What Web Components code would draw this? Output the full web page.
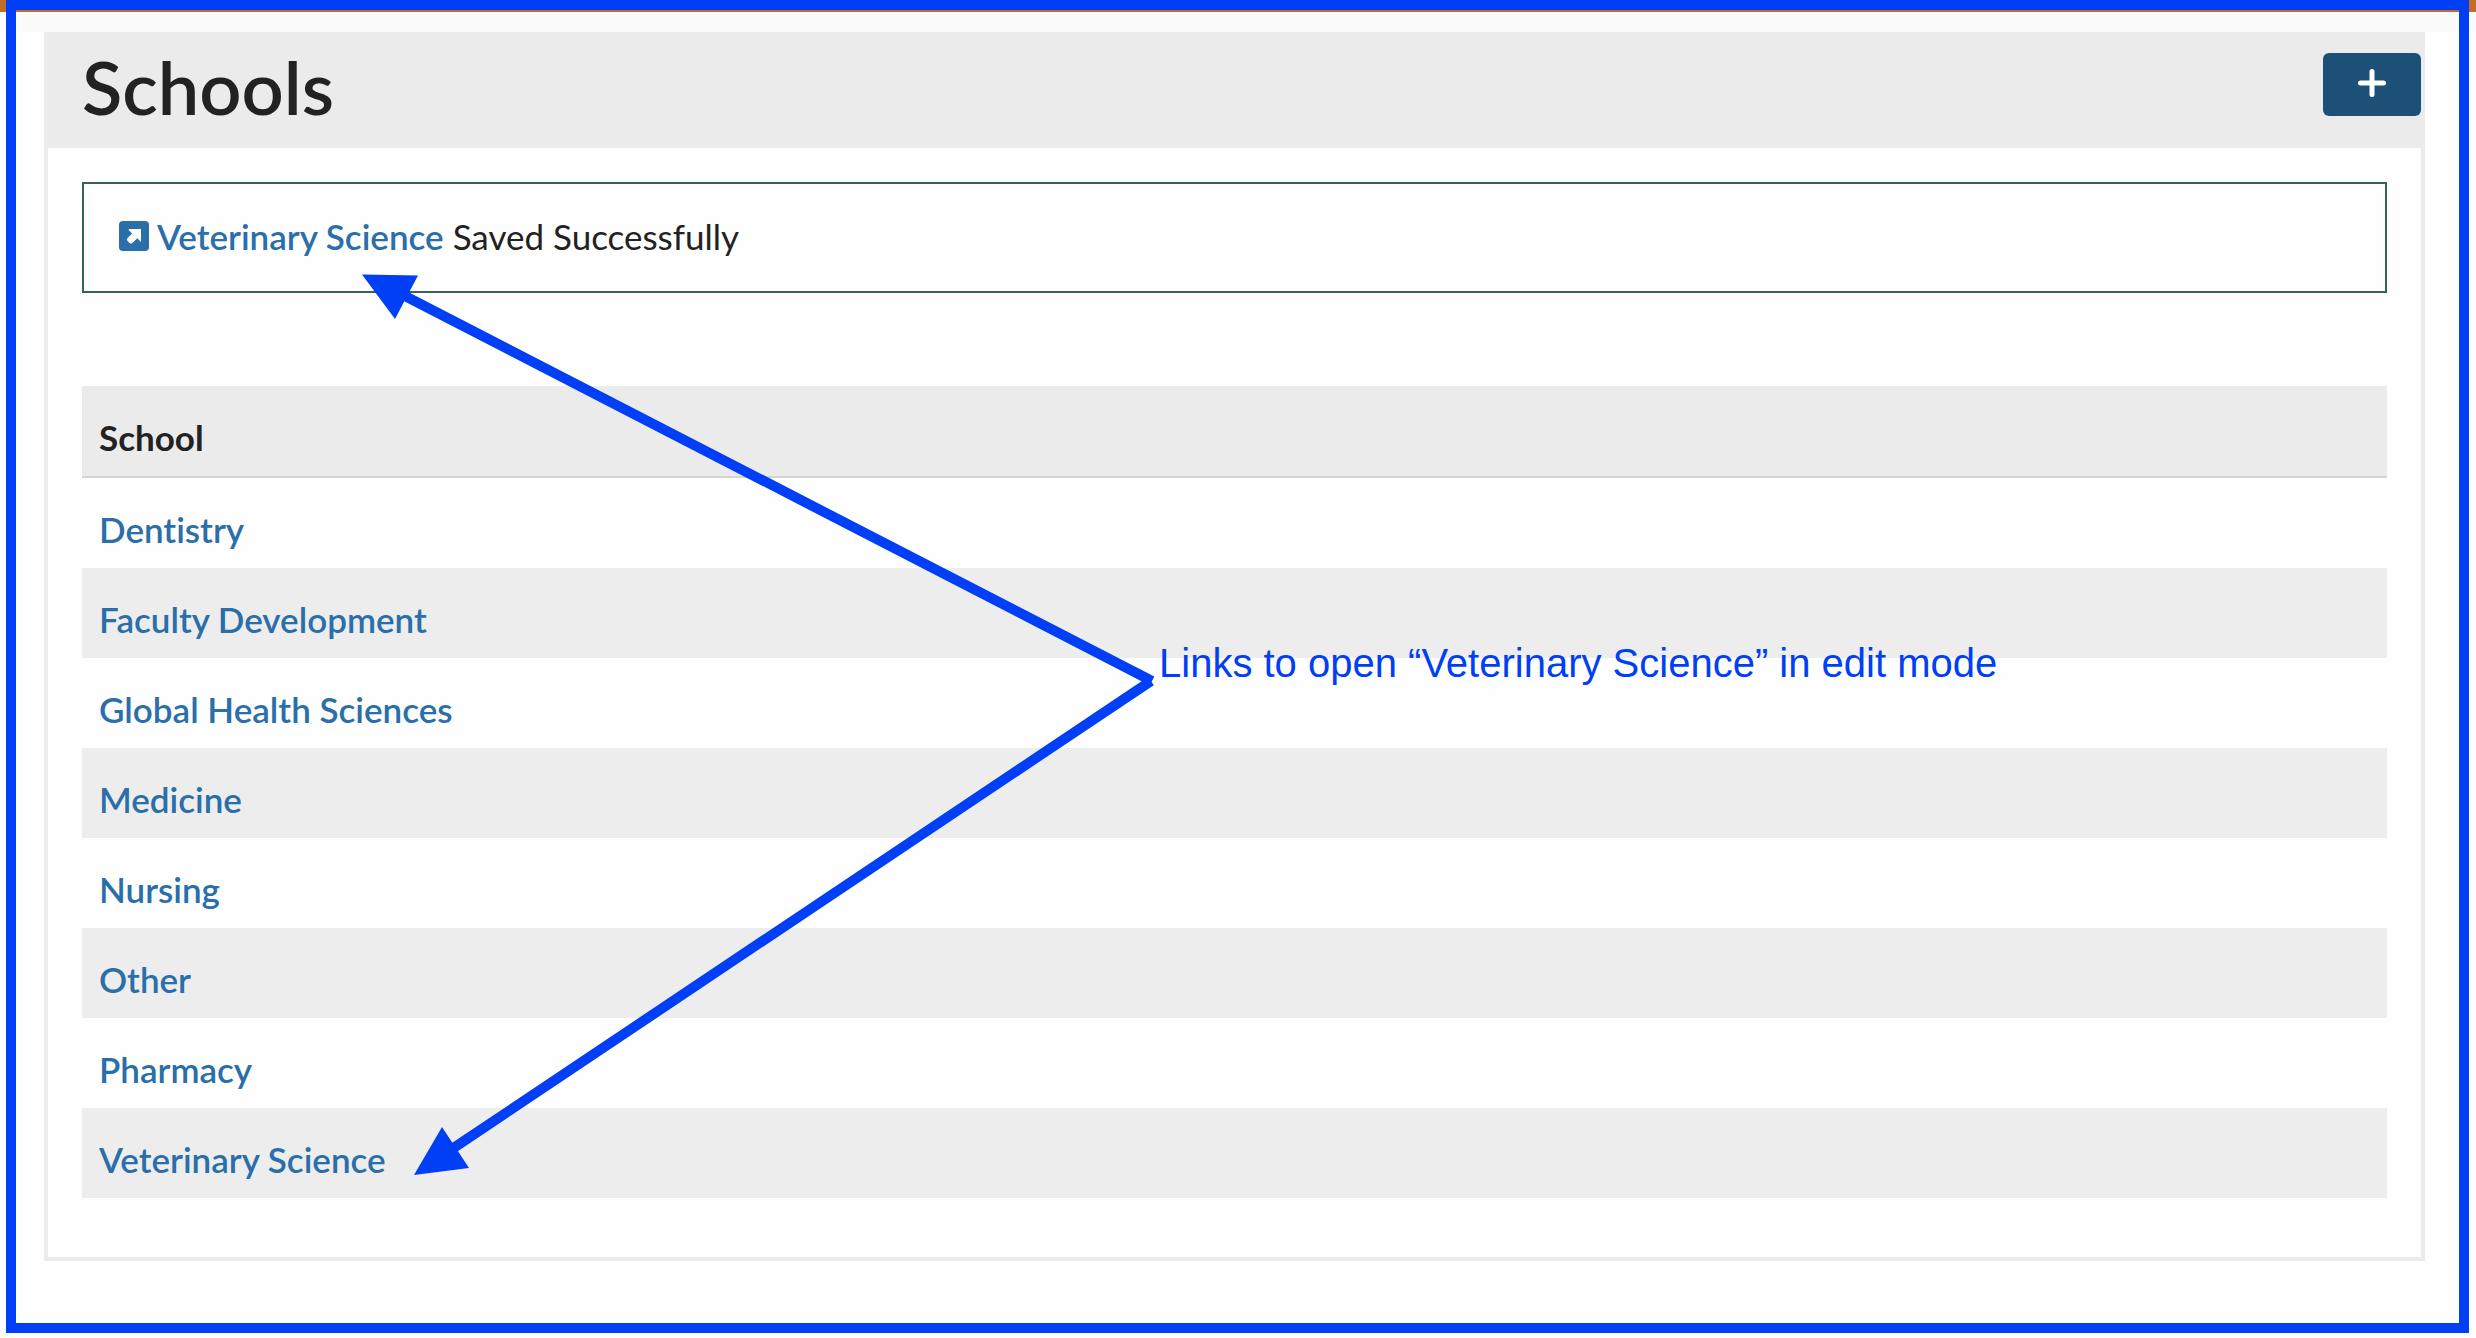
<!DOCTYPE html>
<html lang="en">
<head>
<meta charset="utf-8">
<title>Schools</title>
<style>
html, body { margin: 0; }
body { background: #fefefe; color: #222; font: 35px/50px Lato, sans-serif; font-variant-ligatures: none; }
</style>
</head>
<body>
<app-page>
  <school-panel heading="Schools">
    <save-alert name="Veterinary Science">Saved Successfully</save-alert>
    <school-table></school-table>
  </school-panel>
  <page-callout slot="overlay">Links to open “Veterinary Science” in edit mode</page-callout>
</app-page>
<script>
class Base extends HTMLElement {
  constructor() { super(); this.attachShadow({ mode: 'open' }); }
  connectedCallback() { this.shadowRoot.innerHTML = this.render(); }
}
customElements.define('app-page', class extends Base {
  render() { return `<style>
    :host { display: block; position: relative; box-sizing: border-box; min-height: 100vh; border-top: 12px solid #c26c25; }
    .strip { height: 20px; background: #fbfbfb; }
    main { padding: 0 51px 60px 44px; }
  </style><div class="strip"></div><main><slot></slot></main><slot name="overlay"></slot>`; }
});
customElements.define('school-panel', class extends Base {
  render() { return `<style>
    :host { display: block; border: 4px solid #ebebeb; }
    header { display: flex; justify-content: space-between; align-items: flex-start; background: #ebebeb; padding: 0 0 10px 34px; }
    h1 { margin: 0; font-size: 74px; line-height: 102px; font-weight: 600; }
    button { width: 98px; height: 63px; margin: 17px 0 0; padding: 0 0 4px; border: 0; border-radius: 6px; background: #1d5077; display: flex; align-items: center; justify-content: center; }
    .body { padding: 34px 34px 59px; }
  </style><header><h1>${this.getAttribute('heading')}</h1>
  <button type="button" aria-label="Add school"><svg width="28" height="28" viewBox="0 0 28 28" stroke="#fff" stroke-width="5" stroke-linecap="round"><path d="M14 2.5v23M2.5 14h23"/></svg></button></header>
  <div class="body"><slot></slot></div>`; }
});
customElements.define('save-alert', class extends Base {
  render() { return `<style>
    :host { display: flex; align-items: center; gap: 9px; border: 2px solid #35644f; padding: 27px 35px 30px; margin-bottom: 93px; }
    a { color: #2a6fa9; font-weight: 600; text-decoration: none; display: flex; align-items: center; gap: 8px; }
    svg { display: block; }
  </style><a href="#veterinary-science"><svg width="30" height="30" viewBox="0 0 30 30"><rect width="30" height="30" rx="4" fill="#2a6fa9"/><path d="M10 8h12v13l-3.700-3.700-5 4.700q-1.500 1.200-2.700 0l-2.200-2.200q-1.100-1.200 0-2.500l4.700-4.800-3.600-3.500z" fill="#fff"/></svg>${this.getAttribute('name')}</a><span><slot></slot></span>`; }
});
customElements.define('school-table', class extends Base {
  render() {
    const names = ['Dentistry', 'Faculty Development', 'Global Health Sciences', 'Medicine', 'Nursing', 'Other', 'Pharmacy', 'Veterinary Science'];
    return `<style>
    :host { display: block; }
    table { width: 100%; border-collapse: separate; border-spacing: 0; }
    th, td { padding: 26px 17px 14px; text-align: left; }
    th { background: #ebebeb; border-bottom: 2px solid #d4d4d4; font-weight: 700; }
    tbody tr:nth-child(even) { background: #ededed; }
    a { color: #2a6fa9; font-weight: 600; text-decoration: none; }
  </style><table><thead><tr><th scope="col">School</th></tr></thead><tbody>${names.map(n => `<tr><td><a href="#${n.toLowerCase().replace(/ /g, '-')}">${n}</a></td></tr>`).join('')}</tbody></table>`; }
});
customElements.define('page-callout', class extends Base {
  render() { return `<style>
    :host { position: absolute; inset: -12px 0 0; pointer-events: none; color: #003ff5; }
    .frame { position: absolute; inset: 0 7px 5px 6px; border: 10px solid; }
    svg { position: absolute; inset: 0; width: 100%; height: 100%; }
    p { position: absolute; left: 1159px; top: 638px; margin: 0; font: 40px/50px "Liberation Sans", sans-serif; white-space: nowrap; }
  </style><div class="frame"></div>
  <svg fill="currentColor" aria-hidden="true"><path d="M1152 681L405 296M1151 681L452 1149" stroke="currentColor" stroke-width="10"/><path d="M362 274.500L418 275.500L395 319zM414 1175L442 1127L469 1168z"/></svg>
  <p><slot></slot></p>`; }
});
</script>
</body>
</html>
